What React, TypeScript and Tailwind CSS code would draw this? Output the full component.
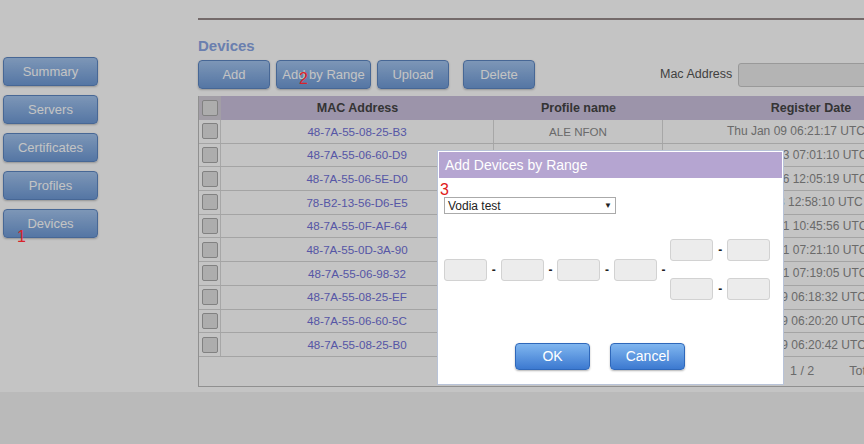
import React from "react";

const sideItems = ["Summary", "Servers", "Certificates", "Profiles", "Devices"];

const devices = [
  { mac: "48-7A-55-08-25-B3", profile: "ALE NFON", date: "Thu Jan 09 06:21:17 UTC 2020" },
  { mac: "48-7A-55-06-60-D9", profile: "ALE NFON", date: "Mon Dec 23 07:01:10 UTC 2019" },
  { mac: "48-7A-55-06-5E-D0", profile: "ALE NFON", date: "Mon Dec 16 12:05:19 UTC 2019" },
  { mac: "78-B2-13-56-D6-E5", profile: "Vodia test", date: "Fri Dec 13 12:58:10 UTC 2019" },
  { mac: "48-7A-55-0F-AF-64", profile: "ALE NFON", date: "Wed Dec 11 10:45:56 UTC 2019" },
  { mac: "48-7A-55-0D-3A-90", profile: "ALE NFON", date: "Wed Dec 11 07:21:10 UTC 2019" },
  { mac: "48-7A-55-06-98-32", profile: "ALE NFON", date: "Wed Dec 11 07:19:05 UTC 2019" },
  { mac: "48-7A-55-08-25-EF", profile: "ALE NFON", date: "Thu Dec 09 06:18:32 UTC 2019" },
  { mac: "48-7A-55-06-60-5C", profile: "ALE NFON", date: "Thu Dec 09 06:20:20 UTC 2019" },
  { mac: "48-7A-55-08-25-B0", profile: "ALE NFON", date: "Thu Dec 09 06:20:42 UTC 2019" },
];

const blueBtn =
  "flex items-center justify-center rounded-[4px] border border-[#5d86c2] bg-gradient-to-b from-[#a3c4ee] to-[#6f9ad6] text-[13px] text-white shadow-[0_1px_2px_rgba(0,0,0,0.25)]";

const Checkbox = () => (
  <div className="w-[16px] h-[16px] rounded-[2px] border border-[#a8a8a8] bg-[#e2e2e2]" />
);

const Field = () => (
  <div className="w-[43px] h-[22px] shrink-0 rounded-[3px] border border-[#d2d2d2] bg-[#ececec]" />
);

const Dash = () => (
  <div className="w-[13.6px] shrink-0 text-center text-[12px] font-bold text-[#222]">-</div>
);

export default function App() {
  return (
    <div className="relative w-[864px] h-[444px] overflow-hidden bg-[#f3f3f3] font-['Liberation_Sans',Arial,sans-serif]">
      <div className="flex h-[392px] bg-white">
        {/* side menu */}
        <aside className="w-[198px] shrink-0 pl-[3px] pt-[57px] flex flex-col gap-[9px]">
          {sideItems.map((item) => (
            <div key={item} className={`${blueBtn} w-[95px] h-[29px]`}>
              {item}
            </div>
          ))}
        </aside>

        <main className="flex-1 min-w-0 pt-[18px]">
          <div className="h-[2px] w-[700px] bg-[#978b8b]" />
          <h2 className="mt-[17px] text-[15px] leading-[18px] font-bold text-[#8aa6e4]">Devices</h2>

          <div className="mt-[5px] flex items-center">
            <div className={`${blueBtn} w-[72px] h-[29px] shrink-0`}>Add</div>
            <div className={`${blueBtn} ml-[6px] w-[95px] h-[29px] shrink-0`}>Add by Range</div>
            <div className={`${blueBtn} ml-[6px] w-[72px] h-[29px] shrink-0`}>Upload</div>
            <div className={`${blueBtn} ml-[14px] w-[72px] h-[29px] shrink-0`}>Delete</div>
            <span className="ml-[125px] shrink-0 text-[12.5px] text-[#555]">Mac Address</span>
            <div className="ml-[6px] w-[160px] h-[24px] shrink-0 rounded-[3px] border border-[#c8c8c8] bg-[#ebebeb]" />
          </div>

          {/* device table */}
          <div className="mt-[7px] w-[760px] border-l border-b border-[#bcbcbc]">
            <div className="grid grid-cols-[22px_273px_169px_296px] h-[24px] bg-[#cbc1de] text-[12.5px] font-bold text-[#444]">
              <div className="flex items-center justify-center bg-[#d3ced9]">
                <Checkbox />
              </div>
              <div className="flex items-center justify-center">MAC Address</div>
              <div className="flex items-center justify-center">Profile name</div>
              <div className="flex items-center justify-center">Register Date</div>
            </div>
            {devices.map((d) => (
              <div
                key={d.mac}
                className="grid grid-cols-[22px_273px_169px_296px] h-[23.7px] border-b border-[#d6d6d6] text-[11.6px]"
              >
                <div className="flex items-center justify-center border-r border-[#dadada]">
                  <Checkbox />
                </div>
                <div className="flex items-center justify-center border-r border-[#dadada] text-[#7070d8]">
                  {d.mac}
                </div>
                <div className="flex items-center justify-center border-r border-[#dadada] text-[#8a8a8a]">
                  {d.profile}
                </div>
                <div className="flex items-center justify-center whitespace-nowrap text-[12px] text-[#8a8a8a]">
                  {d.date}
                </div>
              </div>
            ))}
            <div className="flex h-[29px] items-center text-[12.5px] text-[#8a8a8a]">
              <span className="ml-[591px]">1 / 2</span>
              <span className="ml-[35px]">Total: 13</span>
            </div>
          </div>
        </main>
      </div>

      {/* dim overlay */}
      <div className="absolute inset-0 z-10 bg-black/[0.23]" />

      {/* dialog */}
      <div className="absolute left-[437px] top-[150px] z-20 w-[347px] h-[235px] border border-[#b8c3d8] bg-white p-[1px]">
        <div className="h-[26px] bg-[#b5a5d1] pl-[6px] text-[14px] leading-[26px] text-white">
          Add Devices by Range
        </div>
        <div className="pl-[5px]">
          <div className="mt-[19px] flex h-[17px] w-[172px] items-center justify-between border border-[#aaaaaa] px-[3px] text-[12px] text-[#222]">
            <span>Vodia test</span>
            <span className="text-[8px]">▼</span>
          </div>

          <div className="mt-[25px] flex items-center">
            <Field />
            <Dash />
            <Field />
            <Dash />
            <Field />
            <Dash />
            <Field />
            <Dash />
            <div className="flex flex-col gap-[17px]">
              <div className="flex items-center">
                <Field />
                <Dash />
                <Field />
              </div>
              <div className="flex items-center">
                <Field />
                <Dash />
                <Field />
              </div>
            </div>
          </div>

          <div className="mt-[43px] flex gap-[20px] pl-[71px]">
            <div className="flex w-[75px] h-[27px] items-center justify-center rounded-[4px] border border-[#2f68ba] bg-gradient-to-b from-[#80b6ef] to-[#3c79d0] text-[14px] text-white shadow-[0_1px_2px_rgba(0,0,0,0.3)]">
              OK
            </div>
            <div className="flex w-[75px] h-[27px] items-center justify-center rounded-[4px] border border-[#2f68ba] bg-gradient-to-b from-[#80b6ef] to-[#3c79d0] text-[14px] text-white shadow-[0_1px_2px_rgba(0,0,0,0.3)]">
              Cancel
            </div>
          </div>
        </div>
      </div>

      {/* step annotations */}
      <span className="absolute left-[17px] top-[228px] z-30 text-[16px] leading-[18px] text-[#d8232a]">1</span>
      <span className="absolute left-[299px] top-[70px] z-30 text-[16px] leading-[18px] text-[#d8232a]">2</span>
      <span className="absolute left-[440px] top-[181px] z-30 text-[16px] leading-[18px] text-[#e01a1a]">3</span>
    </div>
  );
}
